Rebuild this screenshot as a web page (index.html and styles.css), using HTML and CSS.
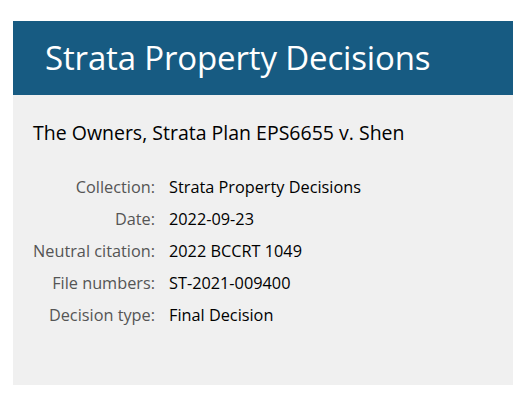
FILE: index.html
```html
<!DOCTYPE html>
<html lang="en">
<head>
<meta charset="utf-8">
<title>Strata Property Decisions</title>
<link rel="stylesheet" href="styles.css">
</head>
<body>
<div class="page">
  <header class="banner">
    <h1 class="banner-title">Strata Property Decisions</h1>
  </header>
  <main class="content">
    <h2 class="case-title">The Owners, Strata Plan EPS6655 v. Shen</h2>
    <dl class="meta">
      <dt>Collection:</dt><dd>Strata Property Decisions</dd>
      <dt>Date:</dt><dd>2022-09-23</dd>
      <dt>Neutral citation:</dt><dd>2022 BCCRT 1049</dd>
      <dt>File numbers:</dt><dd>ST-2021-009400</dd>
      <dt>Decision type:</dt><dd>Final Decision</dd>
    </dl>
  </main>
</div>
</body>
</html>
```
FILE: styles.css
```css
html, body {
  margin: 0;
  padding: 0;
  background: #ffffff;
  overflow: hidden;
}
body {
  font-family: "Open Sans", "Noto Sans", sans-serif;
  color: #000;
}
.page {
  margin: 21px 0 0 13px;
  width: 520px;
}
.banner {
  background: #175b82;
  height: 74px;
  display: flex;
  align-items: center;
  padding-left: 32px;
}
.banner-title {
  margin: 0 0 2px 0;
  color: #fff;
  font-weight: 400;
  font-size: 33px;
  letter-spacing: -0.15px;
  line-height: 1;
}
.content {
  background: #f0f0f0;
  height: 290px;
  padding: 24px 0 0 20px;
  box-sizing: border-box;
}
.case-title {
  margin: 0;
  font-weight: 400;
  font-size: 19.5px;
  line-height: 28px;
}
.meta {
  margin: 29px 0 0 0;
  display: grid;
  grid-template-columns: 122px auto;
  column-gap: 14px;
  row-gap: 10px;
  font-size: 16.3px;
  line-height: 22px;
}
.meta dt {
  text-align: right;
  color: #555;
}
.meta dd {
  margin: 0;
}
```
